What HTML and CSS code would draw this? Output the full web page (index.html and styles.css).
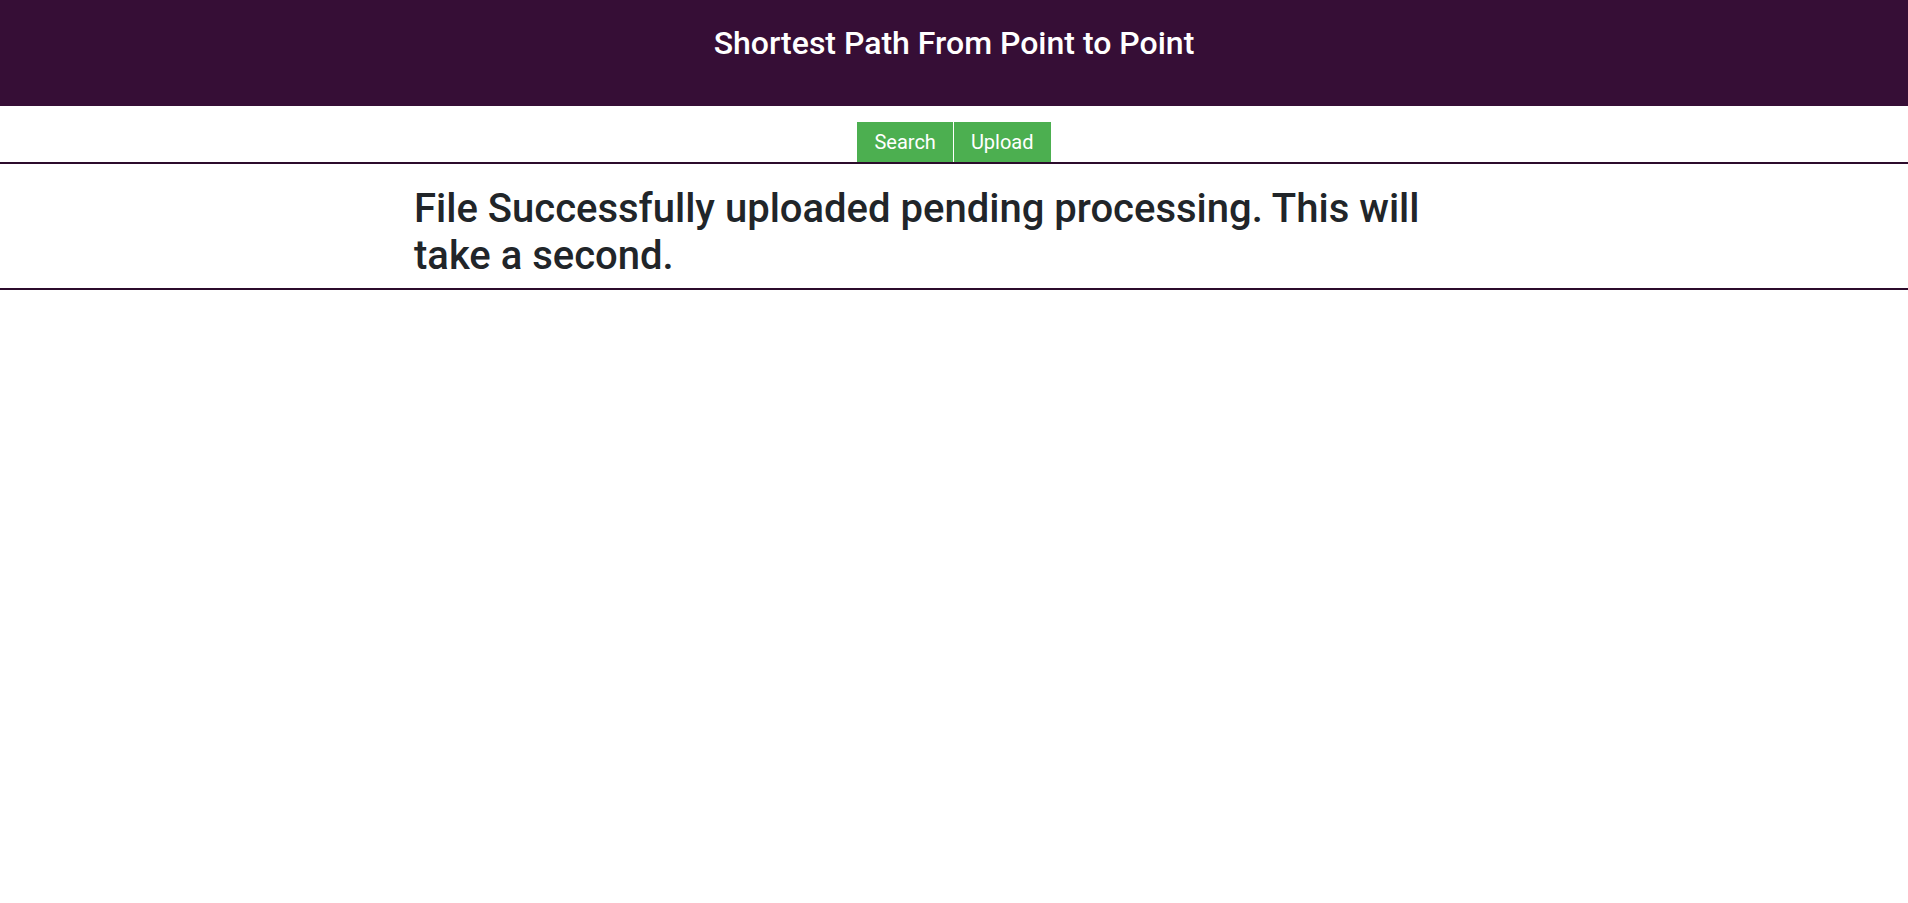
FILE: index.html
```html
<!DOCTYPE html>
<html lang="en">
<head>
<meta charset="utf-8">
<title>Shortest Path From Point to Point</title>
<link rel="stylesheet" href="styles.css">
</head>
<body>
<header class="site-header">
  <h1 class="site-title">Shortest Path From Point to Point</h1>
</header>
<nav class="nav-bar">
  <a class="nav-btn" href="#">Search</a>
  <a class="nav-btn" href="#">Upload</a>
</nav>
<main class="content">
  <div class="container">
    <h2 class="message">File Successfully uploaded pending processing. This will take a second.</h2>
  </div>
</main>
</body>
</html>
```

FILE: styles.css
```css
* { box-sizing: border-box; }
html, body { margin: 0; padding: 0; background: #fff; }
body { font-family: Roboto, "Noto Sans", Arial, sans-serif; color: #212529; }

.site-header {
  background: #360e36;
  height: 106px;
  display: flex;
  justify-content: center;
  padding-top: 25px;
}
.site-title {
  margin: 0;
  color: #fff;
  font-size: 32px;
  font-weight: 500;
  line-height: 36px;
}

.nav-bar {
  display: flex;
  justify-content: center;
  gap: 1px;
  padding-top: 16px;
  border-bottom: 2px solid #2c0c2c;
}
.nav-btn {
  display: flex;
  align-items: center;
  height: 40px;
  padding: 0 17px;
  background: #4caf50;
  color: #fff;
  font-size: 20px;
  text-decoration: none;
}

.content {
  border-bottom: 2px solid #2c0c2c;
}
.container {
  width: 1080px;
  margin: 0 auto;
  padding: 21px 0 9px;
}
.message {
  max-width: 1040px;
  margin: 0;
  font-size: 40px;
  font-weight: 500;
  line-height: 47px;
  color: #212529;
}
```
